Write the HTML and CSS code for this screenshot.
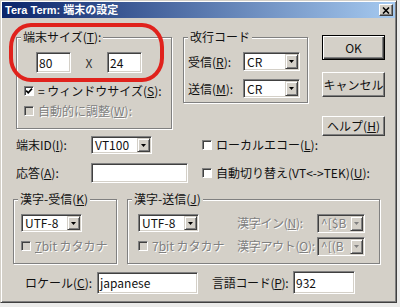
FILE: index.html
```html
<!DOCTYPE html>
<html lang="ja">
<head>
    <meta charset="UTF-8">
    <meta name="viewport" content="width=device-width, initial-scale=1.0">
    <title>Tera Term: 端末の設定</title>
    <link rel="stylesheet" href="styles.css">
</head>
<body>
    <div class="window">
        <div class="titlebar">
            <span class="title">Tera Term: 端末の設定</span>
            <span class="close-btn">
                <svg width="8" height="7" viewBox="0 0 8 7"><path d="M1 0.5 L7 6.5 M7 0.5 L1 6.5" stroke="#000" stroke-width="1.6"/></svg>
            </span>
        </div>

        <div class="content">
            <div class="upper">
                <div class="left-col">
                    <div class="top-row">
                        <!-- Terminal size -->
                        <fieldset class="group size-group">
                            <legend>端末サイズ(<u>T</u>):</legend>
                            <div class="size-row">
                                <div class="edit size-edit">80</div>
                                <span class="times">X</span>
                                <div class="edit size-edit">24</div>
                            </div>
                            <div class="check size-check">
                                <span class="box"><svg width="8" height="8" viewBox="0 0 8 8"><path d="M1.2 3.6 L3.2 5.8 L7 1.6" fill="none" stroke="#000" stroke-width="1.6"/></svg></span>
                                <span>= ウィンドウサイズ(<u>S</u>):</span>
                            </div>
                            <div class="check size-check disabled">
                                <span class="box"></span>
                                <span>自動的に調整(<u>W</u>):</span>
                            </div>
                        </fieldset>

                        <!-- New-line code -->
                        <fieldset class="group newline-group">
                            <legend>改行コード</legend>
                            <div class="combo-row">
                                <span class="combo-label">受信(<u>R</u>):</span>
                                <div class="combo nl-combo"><span class="value">CR</span><span class="arrow"><svg width="5" height="3" viewBox="0 0 5 3"><path d="M0 0 H5 L2.5 3 Z" fill="#000"/></svg></span></div>
                            </div>
                            <div class="combo-row">
                                <span class="combo-label">送信(<u>M</u>):</span>
                                <div class="combo nl-combo"><span class="value">CR</span><span class="arrow"><svg width="5" height="3" viewBox="0 0 5 3"><path d="M0 0 H5 L2.5 3 Z" fill="#000"/></svg></span></div>
                            </div>
                        </fieldset>
                    </div>

                    <div class="field-row id-row">
                        <span>端末ID(<u>I</u>):</span>
                        <div class="combo id-combo"><span class="value">VT100</span><span class="arrow"><svg width="5" height="3" viewBox="0 0 5 3"><path d="M0 0 H5 L2.5 3 Z" fill="#000"/></svg></span></div>
                        <div class="check">
                            <span class="box"></span>
                            <span>ローカルエコー(<u>L</u>):</span>
                        </div>
                    </div>

                    <div class="field-row answer-row">
                        <span>応答(<u>A</u>):</span>
                        <div class="edit answer-edit"></div>
                        <div class="check">
                            <span class="box"></span>
                            <span>自動切り替え(VT&lt;-&gt;TEK)(<u>U</u>):</span>
                        </div>
                    </div>
                </div>

                <div class="buttons">
                    <button type="button" class="btn default">OK</button>
                    <button type="button" class="btn cancel">キャンセル</button>
                    <button type="button" class="btn help">ヘルプ(<u>H</u>)</button>
                </div>
            </div>

            <!-- Kanji code -->
            <div class="kanji-row">
                <fieldset class="group kanji-recv">
                    <legend>漢字-受信(<u>K</u>)</legend>
                    <div class="kanji-body">
                        <div class="combo kanji-combo"><span class="value">UTF-8</span><span class="arrow"><svg width="5" height="3" viewBox="0 0 5 3"><path d="M0 0 H5 L2.5 3 Z" fill="#000"/></svg></span></div>
                        <div class="check disabled">
                            <span class="box"></span>
                            <span><u>7</u>bit カタカナ</span>
                        </div>
                    </div>
                </fieldset>

                <fieldset class="group kanji-send">
                    <legend>漢字-送信(<u>J</u>)</legend>
                    <div class="kanji-body">
                        <div class="combo kanji-combo"><span class="value">UTF-8</span><span class="arrow"><svg width="5" height="3" viewBox="0 0 5 3"><path d="M0 0 H5 L2.5 3 Z" fill="#000"/></svg></span></div>
                        <span class="disabled-text">漢字イン(<u>N</u>):</span>
                        <div class="combo esc-combo disabled"><span class="value">^[$B</span><span class="arrow"><svg width="5" height="3" viewBox="0 0 5 3"><path d="M0 0 H5 L2.5 3 Z" fill="#808080"/></svg></span></div>
                        <div class="check disabled">
                            <span class="box"></span>
                            <span>7<u>b</u>it カタカナ</span>
                        </div>
                        <span class="disabled-text">漢字アウト(<u>O</u>):</span>
                        <div class="combo esc-combo disabled"><span class="value">^[(B</span><span class="arrow"><svg width="5" height="3" viewBox="0 0 5 3"><path d="M0 0 H5 L2.5 3 Z" fill="#808080"/></svg></span></div>
                    </div>
                </fieldset>
            </div>

            <div class="locale-row">
                <span class="locale-label">ロケール(<u>C</u>):</span>
                <div class="edit locale-edit">japanese</div>
                <span class="lang-label">言語コード(<u>P</u>):</span>
                <div class="edit lang-edit">932</div>
            </div>
        </div>

        <!-- red annotation round the terminal size box -->
        <div class="annotation"></div>
    </div>
</body>
</html>
```

FILE: styles.css
```css
body {
    margin: 0;
    background-color: #ebebea;
    font-family: "Noto Sans CJK JP", "Liberation Sans", sans-serif;
    font-size: 12px;
    line-height: 14px;
    color: #111;
    white-space: nowrap;
}
u {
    text-underline-offset: 1px;
}
.window {
    position: relative;
    box-sizing: border-box;
    width: 397px;
    height: 303px;
    padding: 1px;
    background-color: #d4d0c8;
    border: 1px solid;
    border-color: #d4d0c8 #404040 #404040 #d4d0c8;
    box-shadow: inset 1px 1px #fff, inset -1px -1px #808080;
}
.titlebar {
    display: flex;
    align-items: center;
    justify-content: space-between;
    height: 16px;
    padding: 0 2px 0 3px;
    background: linear-gradient(to right, #0a246a, #a6caf0);
    color: #fff;
}
.title {
    font-family: "Liberation Sans", "Noto Sans CJK JP", sans-serif;
    font-size: 11px;
    font-weight: bold;
}
.close-btn {
    display: flex;
    align-items: center;
    justify-content: center;
    box-sizing: border-box;
    width: 14px;
    height: 12px;
    background-color: #d4d0c8;
    border: 1px solid;
    border-color: #fff #404040 #404040 #fff;
    box-shadow: inset -1px -1px #808080;
}
.content {
    padding-top: 12px;
}

/* group boxes */
.group {
    margin: 0;
    padding: 0;
    min-width: 0;
    box-sizing: border-box;
    border: 1px solid #808080;
    box-shadow: inset 1px 1px #fff, 1px 1px #fff;
}
.group legend {
    margin-left: 4px;
    padding: 0 2px;
    line-height: 14px;
    background-color: #d4d0c8;
}

/* sunken edit boxes */
.edit, .combo {
    display: flex;
    align-items: center;
    box-sizing: border-box;
    background-color: #fff;
    border: 1px solid;
    border-color: #808080 #fff #fff #808080;
    box-shadow: inset 1px 1px #404040, inset -1px -1px #d4d0c8;
    padding-left: 2px;
}
.combo {
    padding: 1px;
}
.combo .value {
    flex: 1;
    padding-left: 2px;
}
.combo .arrow {
    display: flex;
    align-items: center;
    justify-content: center;
    box-sizing: border-box;
    width: 13px;
    height: 100%;
    background-color: #d4d0c8;
    border: 1px solid;
    border-color: #d4d0c8 #404040 #404040 #d4d0c8;
    box-shadow: inset 1px 1px #fff, inset -1px -1px #808080;
}
.combo.disabled {
    background-color: #d4d0c8;
}
.combo.disabled .value, .disabled-text, .check.disabled {
    color: #808080;
    text-shadow: 1px 1px #fff;
}
.disabled-text {
    letter-spacing: -0.3px;
}

/* checkboxes */
.check {
    display: flex;
    align-items: center;
    gap: 4px;
}
.box {
    display: flex;
    align-items: center;
    justify-content: center;
    box-sizing: border-box;
    width: 10px;
    height: 10px;
    background-color: #fff;
    border: 1px solid;
    border-color: #808080 #fff #fff #808080;
    box-shadow: inset 1px 1px #404040;
}
.check.disabled .box {
    background-color: #d4d0c8;
}

/* upper part: groups + buttons */
.upper {
    display: grid;
    grid-template-columns: 306px 63px;
    align-items: start;
    margin-left: 14px;
}
.top-row {
    display: flex;
    align-items: flex-start;
}
.size-group {
    width: 156px;
    height: 99px;
}
.size-row {
    display: flex;
    align-items: center;
    margin: 8px 0 0 19px;
}
.size-edit {
    width: 35px;
    height: 21px;
}
.times {
    width: 36px;
    text-align: center;
    color: #303030;
}
.size-check {
    margin: 11px 0 0 7px;
}
.size-check + .size-check {
    margin-top: 6px;
}
.newline-group {
    width: 125px;
    height: 73px;
    margin-left: 11px;
}
.combo-row {
    display: flex;
    align-items: center;
    margin: 8px 0 0 4px;
}
.combo-label {
    width: 55px;
}
.nl-combo {
    width: 57px;
    height: 19px;
}
.field-row {
    display: grid;
    grid-template-columns: 75px 111px auto;
    align-items: center;
}
.id-row {
    margin-top: 7px;
}
.id-combo {
    width: 61px;
    height: 18px;
}
.answer-row {
    margin-top: 9px;
}
.answer-edit {
    width: 97px;
    height: 20px;
}

/* push buttons */
.buttons {
    display: flex;
    flex-direction: column;
    padding-top: 5px;
}
.btn {
    box-sizing: border-box;
    width: 63px;
    height: 25px;
    padding: 0;
    font: inherit;
    color: #111;
    background-color: #d4d0c8;
    border: 1px solid;
    border-color: #fff #404040 #404040 #fff;
    box-shadow: inset -1px -1px #808080;
}
.btn.default {
    border-color: #000;
    box-shadow: inset 1px 1px #fff, inset -1px -1px #404040, inset -2px -2px #808080;
}
.btn.cancel {
    margin-top: 12px;
}
.btn.help {
    margin-top: 19px;
    height: 20px;
}

/* kanji groups */
.kanji-row {
    display: flex;
    gap: 10px;
    margin: 9px 0 0 11px;
}
.kanji-recv {
    width: 104px;
    height: 72px;
}
.kanji-send {
    width: 253px;
    height: 72px;
}
.kanji-body {
    display: grid;
    grid-template-rows: 18px 18px;
    row-gap: 5px;
    align-items: center;
    margin: 8px 0 0 7px;
}
.kanji-send .kanji-body {
    grid-template-columns: 99px 80px 48px;
    margin-left: 10px;
}
.kanji-combo {
    width: 61px;
    height: 18px;
}
.esc-combo {
    width: 48px;
    height: 19px;
}

/* locale line */
.locale-row {
    display: flex;
    align-items: center;
    margin: 7px 0 0 23px;
}
.locale-label {
    width: 72px;
}
.locale-edit {
    width: 101px;
    height: 22px;
}
.lang-label {
    width: 81px;
    margin-left: 14px;
    letter-spacing: -0.3px;
}
.lang-edit {
    width: 62px;
    height: 23px;
}

/* red marker drawn over the screenshot */
.annotation {
    position: absolute;
    left: 8px;
    top: 22px;
    box-sizing: border-box;
    width: 155px;
    height: 59px;
    border: 4px solid #e0221c;
    border-radius: 22px / 24px;
}
```
